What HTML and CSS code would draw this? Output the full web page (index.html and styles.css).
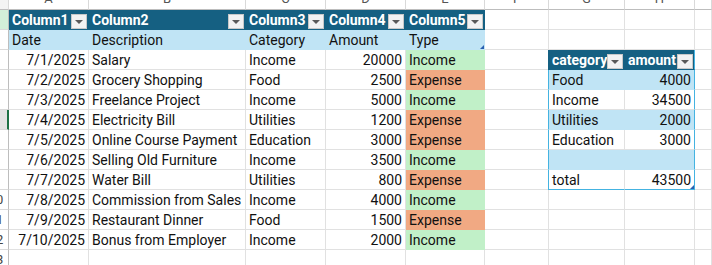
FILE: index.html
```html
<!DOCTYPE html>
<html>
<head>
<meta charset="utf-8">
<link rel="stylesheet" href="styles.css">
</head>
<body>
<div class="sheet">
  <!-- column header row -->
  <div class="ch corner"></div>
  <div class="ch"><span>A</span></div>
  <div class="ch"><span>B</span></div>
  <div class="ch"><span>C</span></div>
  <div class="ch"><span>D</span></div>
  <div class="ch"><span>E</span></div>
  <div class="ch"><span>F</span></div>
  <div class="ch"><span>G</span></div>
  <div class="ch"><span>H</span></div>
  <div class="ch last"></div>

  <!-- row 1 -->
  <div class="rh rh-sel"><span>1</span></div>
  <div class="c th"><span>Column1</span><i class="dd"></i></div>
  <div class="c th"><span>Column2</span><i class="dd"></i></div>
  <div class="c th"><span>Column3</span><i class="dd"></i></div>
  <div class="c th"><span>Column4</span><i class="dd"></i></div>
  <div class="c th"><span>Column5</span><i class="dd"></i></div>
  <div class="c"></div><div class="c"></div><div class="c"></div><div class="c"></div>

  <!-- row 2 -->
  <div class="rh"><span>2</span></div>
  <div class="c band">Date</div>
  <div class="c band">Description</div>
  <div class="c band">Category</div>
  <div class="c band">Amount</div>
  <div class="c band handle">Type</div>
  <div class="c"></div><div class="c"></div><div class="c"></div><div class="c"></div>

  <!-- row 3 -->
  <div class="rh"><span>3</span></div>
  <div class="c r">7/1/2025</div>
  <div class="c">Salary</div>
  <div class="c">Income</div>
  <div class="c r">20000</div>
  <div class="c inc">Income</div>
  <div class="c"></div>
  <div class="c th tl"><span>category</span><i class="dd"></i></div>
  <div class="c th tr"><span>amount</span><i class="dd"></i></div>
  <div class="c"></div>

  <!-- row 4 -->
  <div class="rh"><span>4</span></div>
  <div class="c r">7/2/2025</div>
  <div class="c">Grocery Shopping</div>
  <div class="c">Food</div>
  <div class="c r">2500</div>
  <div class="c exp">Expense</div>
  <div class="c"></div>
  <div class="c band tl">Food</div>
  <div class="c band tr r">4000</div>
  <div class="c"></div>

  <!-- row 5 -->
  <div class="rh"><span>5</span></div>
  <div class="c r">7/3/2025</div>
  <div class="c">Freelance Project</div>
  <div class="c">Income</div>
  <div class="c r">5000</div>
  <div class="c inc">Income</div>
  <div class="c"></div>
  <div class="c tl">Income</div>
  <div class="c tr r">34500</div>
  <div class="c"></div>

  <!-- row 6 -->
  <div class="rh rh-act"><span>6</span></div>
  <div class="c r">7/4/2025</div>
  <div class="c">Electricity Bill</div>
  <div class="c">Utilities</div>
  <div class="c r">1200</div>
  <div class="c exp">Expense</div>
  <div class="c"></div>
  <div class="c band tl">Utilities</div>
  <div class="c band tr r">2000</div>
  <div class="c"></div>

  <!-- row 7 -->
  <div class="rh"><span>7</span></div>
  <div class="c r">7/5/2025</div>
  <div class="c">Online Course Payment</div>
  <div class="c">Education</div>
  <div class="c r">3000</div>
  <div class="c exp">Expense</div>
  <div class="c"></div>
  <div class="c tl">Education</div>
  <div class="c tr r">3000</div>
  <div class="c"></div>

  <!-- row 8 -->
  <div class="rh"><span>8</span></div>
  <div class="c r">7/6/2025</div>
  <div class="c">Selling Old Furniture</div>
  <div class="c">Income</div>
  <div class="c r">3500</div>
  <div class="c inc">Income</div>
  <div class="c"></div>
  <div class="c band tl"></div>
  <div class="c band tr"></div>
  <div class="c"></div>

  <!-- row 9 -->
  <div class="rh"><span>9</span></div>
  <div class="c r">7/7/2025</div>
  <div class="c">Water Bill</div>
  <div class="c">Utilities</div>
  <div class="c r">800</div>
  <div class="c exp">Expense</div>
  <div class="c"></div>
  <div class="c tl tb">total</div>
  <div class="c tr tb r handle">43500</div>
  <div class="c"></div>

  <!-- row 10 -->
  <div class="rh"><span>10</span></div>
  <div class="c r">7/8/2025</div>
  <div class="c">Commission from Sales</div>
  <div class="c">Income</div>
  <div class="c r">4000</div>
  <div class="c inc">Income</div>
  <div class="c"></div><div class="c"></div><div class="c"></div><div class="c"></div>

  <!-- row 11 -->
  <div class="rh"><span>11</span></div>
  <div class="c r">7/9/2025</div>
  <div class="c">Restaurant Dinner</div>
  <div class="c">Food</div>
  <div class="c r">1500</div>
  <div class="c exp">Expense</div>
  <div class="c"></div><div class="c"></div><div class="c"></div><div class="c"></div>

  <!-- row 12 -->
  <div class="rh"><span>12</span></div>
  <div class="c r">7/10/2025</div>
  <div class="c">Bonus from Employer</div>
  <div class="c">Income</div>
  <div class="c r">2000</div>
  <div class="c inc">Income</div>
  <div class="c"></div><div class="c"></div><div class="c"></div><div class="c"></div>

  <!-- row 13 -->
  <div class="rh"><span>13</span></div>
  <div class="c"></div><div class="c"></div><div class="c"></div><div class="c"></div>
  <div class="c"></div><div class="c"></div><div class="c"></div><div class="c"></div><div class="c"></div>
</div>
</body>
</html>
```

FILE: styles.css
```css
html, body {
  margin: 0;
  padding: 0;
  background: #ffffff;
  overflow: hidden;
}

.sheet {
  display: grid;
  grid-template-columns: 9px 80px 157px 80px 80px 79px 64px 76px 70px 1fr;
  grid-template-rows: 10px repeat(13, 20px);
  width: 712px;
  height: 265px;
  overflow: hidden;
  font-family: Roboto, "Liberation Sans", Arial, sans-serif;
  font-size: 14px;
  color: #111111;
}

.ch {
  box-sizing: border-box;
  border-right: 1px solid #d9d9d9;
  border-bottom: 1px solid #bdbdbd;
  background: #ffffff;
  overflow: hidden;
  color: #555555;
  font-size: 13px;
  text-align: center;
}
.ch span {
  display: block;
  height: 20px;
  line-height: 20px;
  margin-top: -11px;
}
.ch.corner {
  background: #f3f3f3;
}

.rh {
  box-sizing: border-box;
  border-right: 1px solid #bdbdbd;
  border-bottom: 1px solid #d9d9d9;
  background: #ffffff;
  overflow: hidden;
  color: #444444;
  font-size: 13px;
}
.rh span {
  display: block;
  width: 30px;
  margin-left: -19px;
  text-align: center;
  line-height: 20px;
}
.rh-sel {
  background: #d3efd9;
}
.rh-act {
  background: #e3e3e3;
  border-right: 2px solid #1e7145;
}

.c {
  box-sizing: border-box;
  border-right: 1px solid #e1e1e1;
  border-bottom: 1px solid #e1e1e1;
  padding: 1px 3px 0 3px;
  line-height: 18px;
  white-space: nowrap;
  position: relative;
}
.c.r {
  text-align: right;
}

.th {
  background: #156082;
  border-color: #156082;
  color: #ffffff;
  font-weight: bold;
  display: flex;
  align-items: center;
  justify-content: space-between;
  padding: 0 1px 0 3px;
}
.dd {
  display: block;
  box-sizing: border-box;
  width: 16px;
  height: 15px;
  margin-top: 3px;
  background: #f2f2f2;
  border: 1px solid #c8c8c8;
  position: relative;
}
.dd::after {
  content: "";
  position: absolute;
  left: 3px;
  top: 5px;
  border-left: 4px solid transparent;
  border-right: 4px solid transparent;
  border-top: 4px solid #595959;
}

.band {
  background: #c0e4f5;
  border-color: #c0e4f5;
}
.inc {
  background: #c1f0c8;
  border-color: #c1f0c8;
}
.exp {
  background: #f1a983;
  border-color: #f1a983;
}

.tl {
  border-left: 1px solid #44b3e1;
  margin-left: -1px;
}
.tr {
  border-right: 1px solid #44b3e1;
}
.tb {
  border-bottom: 1px solid #44b3e1;
}
.tl.th, .tr.th {
  border-left-color: #156082;
}
.tr.th {
  border-right-color: #44b3e1;
}

.handle::after {
  content: "";
  position: absolute;
  right: 0;
  bottom: 0;
  border-left: 4px solid transparent;
  border-bottom: 4px solid #2a5fb0;
}
```
